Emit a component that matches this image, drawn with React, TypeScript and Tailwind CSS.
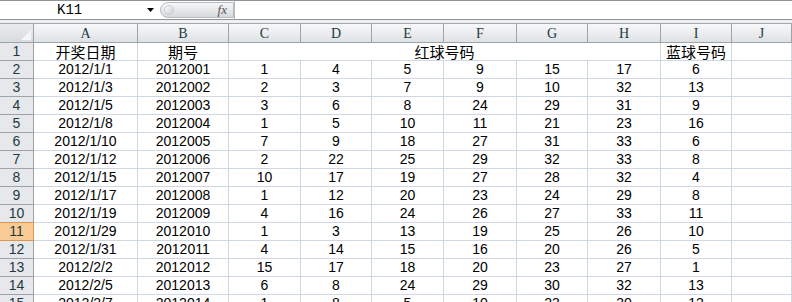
import React from "react"

const rows = [
  ["2012/1/1", "2012001", 1, 4, 5, 9, 15, 17, 6],
  ["2012/1/3", "2012002", 2, 3, 7, 9, 10, 32, 13],
  ["2012/1/5", "2012003", 3, 6, 8, 24, 29, 31, 9],
  ["2012/1/8", "2012004", 1, 5, 10, 11, 21, 23, 16],
  ["2012/1/10", "2012005", 7, 9, 18, 27, 31, 33, 6],
  ["2012/1/12", "2012006", 2, 22, 25, 29, 32, 33, 8],
  ["2012/1/15", "2012007", 10, 17, 19, 27, 28, 32, 4],
  ["2012/1/17", "2012008", 1, 12, 20, 23, 24, 29, 8],
  ["2012/1/19", "2012009", 4, 16, 24, 26, 27, 33, 11],
  ["2012/1/29", "2012010", 1, 3, 13, 19, 25, 26, 10],
  ["2012/1/31", "2012011", 4, 14, 15, 16, 20, 26, 5],
  ["2012/2/2", "2012012", 15, 17, 18, 20, 23, 27, 1],
  ["2012/2/5", "2012013", 6, 8, 24, 29, 30, 32, 13],
  ["2012/2/7", "2012014", 1, 8, 5, 10, 23, 30, 12],
]

const letters = ["A", "B", "C", "D", "E", "F", "G", "H", "I", "J"]

const cell = "h-[18px] leading-[17px] border-r border-b border-[#d0d7e5] flex items-center justify-center text-[14px] text-black whitespace-nowrap"
const cjk = "font-['Noto_Sans_CJK_SC',sans-serif] text-[15px]"
const rowHead = "h-[18px] leading-[17px] border-r border-b border-[#9ea3a8] flex items-center justify-center text-[14px] text-[#1d3b3f]"

export default function App() {
  return (
    <div className="w-[792px] h-[302px] overflow-hidden bg-white font-['Liberation_Sans','Noto_Sans_CJK_SC',sans-serif]">
      {/* formula bar */}
      <div className="flex h-[20px] border-t border-b border-[#8e9398] bg-white">
        <div className="w-[160px] flex items-center">
          <span className="ml-[57px] text-[14px] font-['Liberation_Mono',monospace] text-black">K11</span>
          <svg className="ml-auto mr-[6px]" width="7" height="4" viewBox="0 0 7 4">
            <path d="M0 0H7L3.5 4Z" fill="#000" />
          </svg>
        </div>
        <div className="w-[74px] my-[1px] rounded-l-full border border-[#b8bcc1] bg-gradient-to-b from-[#f7f7f7] to-[#d6d9dc] flex items-center px-[3px]">
          <div className="w-[10px] h-[10px] rounded-full bg-gradient-to-br from-white to-[#c9ccd0] border border-[#c9ccd0]" />
          <span className="ml-auto mr-[3px] text-[13px] italic font-['Liberation_Serif',serif] text-[#555]">fx</span>
        </div>
        <div className="flex-1 border-l border-[#b8bcc1]" />
      </div>
      <div className="h-[4px] bg-[#eef0f2] border-b border-[#a5a9ae]" />

      {/* sheet grid */}
      <div className="grid grid-cols-[34px_104px_91px_72px_71px_72px_73px_71px_73px_71px_1fr]">
        <div className="h-[19px] border-r border-b border-[#9ea3a8] bg-gradient-to-b from-[#e9ebee] to-[#d9dcdf] relative">
          <svg className="absolute right-[2px] bottom-[2px]" width="10" height="10" viewBox="0 0 10 10">
            <path d="M10 0V10H0Z" fill="#f5f6f7" />
          </svg>
        </div>
        {letters.map((l) => (
          <div
            key={l}
            className="h-[19px] border-r border-b border-[#9ea3a8] bg-gradient-to-b from-[#f7f8f9] to-[#dfe2e5] flex items-center justify-center text-[14px] text-[#1d3b3f] font-['Liberation_Serif',serif]"
          >
            {l}
          </div>
        ))}

        <div className={`${rowHead} bg-[#e6e8eb]`}>1</div>
        <div className={`${cell} ${cjk}`}>开奖日期</div>
        <div className={`${cell} ${cjk}`}>期号</div>
        <div className={`${cell} ${cjk} col-span-6`}>红球号码</div>
        <div className={`${cell} ${cjk}`}>蓝球号码</div>
        <div className={cell} />

        {rows.map((r, i) => {
          const n = i + 2
          const selected = n === 11
          return (
            <React.Fragment key={n}>
              <div
                className={
                  selected
                    ? `${rowHead} bg-[#f8cb94] border-[#e0964d] border-t border-t-[#e0964d] -mt-[1px] h-[19px]`
                    : `${rowHead} bg-[#e6e8eb]`
                }
              >
                {n}
              </div>
              {r.map((v, j) => (
                <div key={j} className={cell}>
                  {v}
                </div>
              ))}
              <div className={cell} />
            </React.Fragment>
          )
        })}
      </div>
    </div>
  )
}
